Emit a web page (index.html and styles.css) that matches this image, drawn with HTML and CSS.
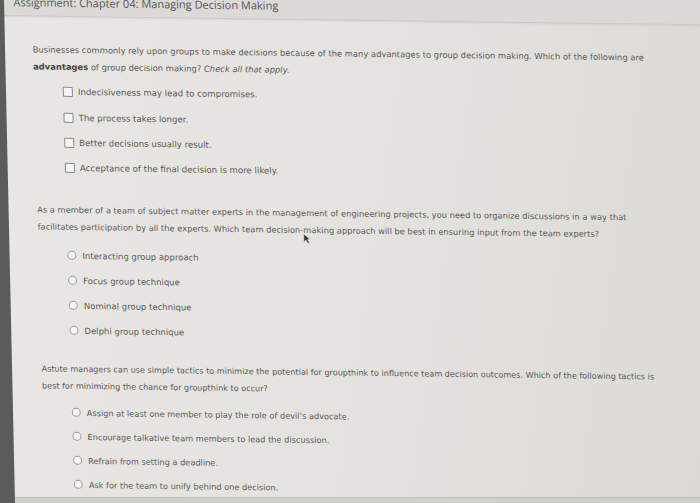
FILE: index.html
```html
<!DOCTYPE html>
<html lang="en">
<head>
<meta charset="utf-8">
<title>Assignment: Chapter 04: Managing Decision Making</title>
<link rel="stylesheet" href="styles.css">
</head>
<body>
<div class="screen">
  <div class="bezel"></div>
  <div class="page">
    <header class="topbar">
      <h1 class="title">Assignment: Chapter 04: Managing Decision Making</h1>
    </header>
    <main class="content">
      <section class="question q1">
        <p class="prompt">Businesses commonly rely upon groups to make decisions because of the many advantages to group decision making. Which of the following are<br><b>advantages</b> of group decision making? <i>Check all that apply.</i></p>
        <ul class="options">
          <li class="option"><span class="box"></span><span>Indecisiveness may lead to compromises.</span></li>
          <li class="option"><span class="box"></span><span>The process takes longer.</span></li>
          <li class="option"><span class="box"></span><span>Better decisions usually result.</span></li>
          <li class="option"><span class="box"></span><span>Acceptance of the final decision is more likely.</span></li>
        </ul>
      </section>
      <section class="question q2">
        <p class="prompt">As a member of a team of subject matter experts in the management of engineering projects, you need to organize discussions in a way that<br>facilitates participation by all the experts. Which team decision-making approach will be best in ensuring input from the team experts?</p>
        <ul class="options">
          <li class="option"><span class="radio"></span><span>Interacting group approach</span></li>
          <li class="option"><span class="radio"></span><span>Focus group technique</span></li>
          <li class="option"><span class="radio"></span><span>Nominal group technique</span></li>
          <li class="option"><span class="radio"></span><span>Delphi group technique</span></li>
        </ul>
        <svg class="cursor" width="8" height="11" viewBox="0 0 8 11"><path d="M1 1 L1 9 L3 7 L5 10.5 L6.5 9.8 L4.6 6.6 L7.2 6.4 Z" fill="#333" stroke="#ddd" stroke-width="0.6"/></svg>
      </section>
      <section class="question q3">
        <p class="prompt">Astute managers can use simple tactics to minimize the potential for groupthink to influence team decision outcomes. Which of the following tactics is<br>best for minimizing the chance for groupthink to occur?</p>
        <ul class="options">
          <li class="option"><span class="radio"></span><span>Assign at least one member to play the role of devil’s advocate.</span></li>
          <li class="option"><span class="radio"></span><span>Encourage talkative team members to lead the discussion.</span></li>
          <li class="option"><span class="radio"></span><span>Refrain from setting a deadline.</span></li>
          <li class="option"><span class="radio"></span><span>Ask for the team to unify behind one decision.</span></li>
        </ul>
      </section>
    </main>
  </div>
  <div class="bottom"></div>
</div>
</body>
</html>
```
FILE: styles.css
```css
html, body {
  margin: 0;
  padding: 0;
}
body {
  width: 700px;
  height: 503px;
  overflow: hidden;
  background: #d6d6d1;
  font-family: "DejaVu Sans", Verdana, sans-serif;
  color: #5a5a5a;
}
.screen {
  position: relative;
  width: 700px;
  height: 503px;
  overflow: hidden;
  display: flex;
  flex-direction: column;
}
.bezel {
  position: absolute;
  left: 0;
  top: 0;
  width: 16px;
  height: 503px;
  background: #5b5b5b;
  clip-path: polygon(0 0, 4px 0, 15px 503px, 0 503px);
  z-index: 3;
}
.page {
  flex: none;
  width: 720px;
  height: 507px;
  margin-top: -10px;
  display: flex;
  flex-direction: column;
  background: linear-gradient(100deg, #e8e7e3 0%, #e3e2de 55%, #dad9d4 100%);
  transform-origin: 0 0;
  transform: skew(1.6deg, 0.76deg);
}
.topbar {
  height: 25px;
  flex: none;
  overflow: hidden;
  background: #dbdad6;
  border-bottom: 1px solid #cbcac6;
  box-shadow: 0 1px 2px rgba(0,0,0,0.06);
}
.title {
  margin: 5px 0 0 13px;
  font-family: "Open Sans", sans-serif;
  font-weight: 400;
  font-size: 11px;
  line-height: 14px;
  color: #555;
  white-space: nowrap;
}
.content {
  display: flex;
  flex-direction: column;
  padding: 25px 0 0 31px;
}
.question {
  position: relative;
}
.prompt {
  margin: 0;
  line-height: 17px;
  white-space: nowrap;
}
.prompt b { color: #454545; }
.options {
  list-style: none;
  margin: 0;
  padding: 0 0 0 29px;
  display: flex;
  flex-direction: column;
}
.option {
  display: flex;
  align-items: center;
  gap: 5px;
}
.q1 .prompt { font-size: 8.4px; margin-bottom: 3.6px; }
.q1 .option { font-size: 8.6px; height: 25.3px; }
.q2 { margin-top: 21px; }
.q2 .prompt { font-size: 8.3px; margin-bottom: 7.5px; }
.q2 .option { font-size: 8.5px; height: 25px; gap: 6px; }
.q3 { margin-top: 17.5px; }
.q3 .prompt { font-size: 8.1px; margin-bottom: 6px; }
.q3 .option { font-size: 8.2px; height: 24px; gap: 6px; }
.box {
  width: 8px;
  height: 8px;
  border: 1px solid #8c8c8c;
  border-radius: 1px;
  background: #f5f5f3;
  flex: none;
}
.radio {
  width: 7px;
  height: 7px;
  border: 1px solid #9a9a9a;
  border-radius: 50%;
  background: #f6f6f4;
  flex: none;
}
.cursor {
  position: absolute;
  left: 265px;
  top: 28px;
}
.bottom {
  position: relative;
  z-index: 2;
  height: 5px;
  flex: none;
  border-top: 1px solid #bdbdb8;
  background: #cfcfca;
}
```
